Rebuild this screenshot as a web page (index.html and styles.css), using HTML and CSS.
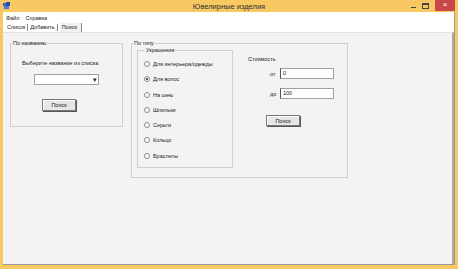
FILE: index.html
```html
<!DOCTYPE html>
<html lang="ru">
<head>
    <meta charset="UTF-8">
    <title>Ювелирные изделия</title>
    <link rel="stylesheet" href="styles.css">
</head>
<body>
    <div class="window">
        <div class="titlebar">
            <svg class="app-icon" width="8" height="7" viewBox="0 0 8 7">
                <rect x="0" y="1" width="3" height="3" fill="#3a5fd0"/>
                <rect x="3" y="0" width="4" height="4" fill="#2b48b8"/>
                <rect x="1" y="4" width="5" height="3" fill="#4c78e0"/>
            </svg>
            <span class="title">Ювелирные изделия</span>
            <div class="controls">
                <span class="ctl-min"></span>
                <span class="ctl-max"></span>
                <span class="ctl-close">×</span>
            </div>
        </div>

        <div class="client">
            <div class="menubar">
                <span>Файл</span>
                <span>Справка</span>
            </div>
            <div class="tabs">
                <span class="tab">Список</span>
                <span class="tab">Добавить</span>
                <span class="tab active">Поиск</span>
            </div>

            <div class="tabpage">
                <fieldset class="group by-name">
                    <legend>По названию</legend>
                    <div class="hint">Выберите название из списка</div>
                    <div class="combo"><span class="arrow">▾</span></div>
                    <button class="btn btn-name">Поиск</button>
                </fieldset>

                <fieldset class="group by-type">
                    <legend>По типу</legend>
                    <fieldset class="group kinds">
                        <legend>Украшения</legend>
                        <label class="radio"><span class="dot"></span>Для интерьера/одежды</label>
                        <label class="radio"><span class="dot checked"></span>Для волос</label>
                        <label class="radio"><span class="dot"></span>На шею</label>
                        <label class="radio"><span class="dot"></span>Шпильки</label>
                        <label class="radio"><span class="dot"></span>Серьги</label>
                        <label class="radio"><span class="dot"></span>Кольцо</label>
                        <label class="radio"><span class="dot"></span>Браслеты</label>
                    </fieldset>

                    <div class="price">
                        <div class="price-title">Стоимость</div>
                        <div class="price-row">
                            <span class="price-label">от</span>
                            <div class="field">0</div>
                        </div>
                        <div class="price-row">
                            <span class="price-label">до</span>
                            <div class="field">100</div>
                        </div>
                        <button class="btn btn-price">Поиск</button>
                    </div>
                </fieldset>
            </div>
        </div>
    </div>
</body>
</html>
```

FILE: styles.css
```css
body {
    margin: 0;
    font-family: "Liberation Sans", Arial, sans-serif;
    font-size: 5.5px;
    color: #222;
    background: #f8c862;
}

.window {
    width: 458px;
    height: 269px;
    display: flex;
    flex-direction: column;
    background: #f8c862;
    padding: 0 3px 4px 3px;
    box-sizing: border-box;
}

.titlebar {
    height: 12px;
    display: flex;
    align-items: center;
    position: relative;
    flex-shrink: 0;
}

.app-icon {
    margin-top: -2px;
}

.title {
    position: absolute;
    left: 0;
    right: 0;
    text-align: center;
    font-size: 7.5px;
    color: #333;
    top: 2px;
}

.controls {
    margin-left: auto;
    display: flex;
    align-items: flex-start;
    height: 12px;
}

.ctl-min {
    width: 5px;
    height: 1px;
    background: #444;
    margin: 7px 6px 0 0;
}

.ctl-max {
    width: 5px;
    height: 3px;
    border: 1px solid #444;
    border-top-width: 2px;
    margin: 3px 6px 0 0;
}

.ctl-close {
    width: 20px;
    height: 11px;
    background: #c9474a;
    color: #fff;
    font-size: 8px;
    line-height: 10px;
    text-align: center;
}

.client {
    flex: 1;
    display: flex;
    flex-direction: column;
    background: #fff;
    border-right: 1px solid #9a9a9a;
    border-bottom: 1px solid #9a9a9a;
}

.menubar {
    height: 9px;
    display: flex;
    align-items: center;
    gap: 6px;
    padding-left: 3px;
    padding-top: 1px;
}

.tabs {
    height: 10px;
    display: flex;
    align-items: center;
    padding-left: 2px;
}

.tab {
    padding: 0 2px;
    border-right: 1px solid #888;
    line-height: 7px;
}

.tab.active {
    background: #f0f0f0;
    margin-left: 2px;
    padding: 1px 4px 1px 2px;
}

.tabpage {
    flex: 1;
    display: flex;
    align-items: flex-start;
    gap: 8px;
    padding: 8px 0 0 7px;
    background: #f3f3f4;
    border-top: 1px solid #e2e2e2;
    border-right: 2px solid #a8a8a8;
}

.group {
    margin: 0;
    padding: 0;
    min-width: 0;
    border: 1px solid #cfcfd3;
    box-sizing: border-box;
}

.group legend {
    padding: 0 1px;
    margin-left: 1px;
    line-height: 5px;
}

.by-name {
    width: 113px;
    height: 86px;
    display: flex;
    flex-direction: column;
    align-items: flex-start;
}

.hint {
    margin: 14px 0 0 11px;
}

.combo {
    width: 63px;
    height: 9px;
    margin: 8px 0 0 23px;
    background: #fff;
    border: 1px solid #a0a0a0;
    position: relative;
}

.arrow {
    position: absolute;
    right: 1px;
    top: 1px;
    font-size: 7px;
    line-height: 7px;
}

.btn {
    font-family: inherit;
    font-size: 5.5px;
    color: #222;
    background: #e6e6e6;
    border: 1px solid #7a7a7a;
    box-shadow: inset 1px 1px 0 #fff, 1px 1px 0 #555;
    padding: 0;
}

.btn-name {
    width: 34px;
    height: 12px;
    margin: 14px 0 0 31px;
}

.by-type {
    width: 217px;
    height: 137px;
    display: flex;
    align-items: flex-start;
}

.kinds {
    width: 96px;
    height: 120px;
    margin: 2px 0 0 5px;
    display: flex;
    flex-direction: column;
    gap: 9.3px;
    padding: 8px 0 0 6px;
}

.radio {
    display: flex;
    align-items: center;
    gap: 3px;
    height: 6px;
}

.dot {
    width: 4px;
    height: 4px;
    border: 1px solid #8a8a8a;
    border-radius: 50%;
    background: #fff;
    position: relative;
}

.dot.checked::after {
    content: "";
    position: absolute;
    left: 1px;
    top: 1px;
    width: 2px;
    height: 2px;
    border-radius: 50%;
    background: #222;
}

.price {
    display: flex;
    flex-direction: column;
    align-items: flex-start;
    margin: 10px 0 0 15px;
}

.price-row {
    display: flex;
    align-items: center;
    margin-top: 6px;
}

.price-row + .price-row {
    margin-top: 9px;
}

.price-label {
    width: 10px;
    margin-left: 22px;
}

.field {
    width: 50px;
    height: 9px;
    background: #fff;
    border: 1px solid #a0a0a0;
    border-left-color: #555;
    padding-left: 2px;
    line-height: 9px;
}

.btn-price {
    width: 34px;
    height: 11px;
    margin: 16px 0 0 18px;
}
```
